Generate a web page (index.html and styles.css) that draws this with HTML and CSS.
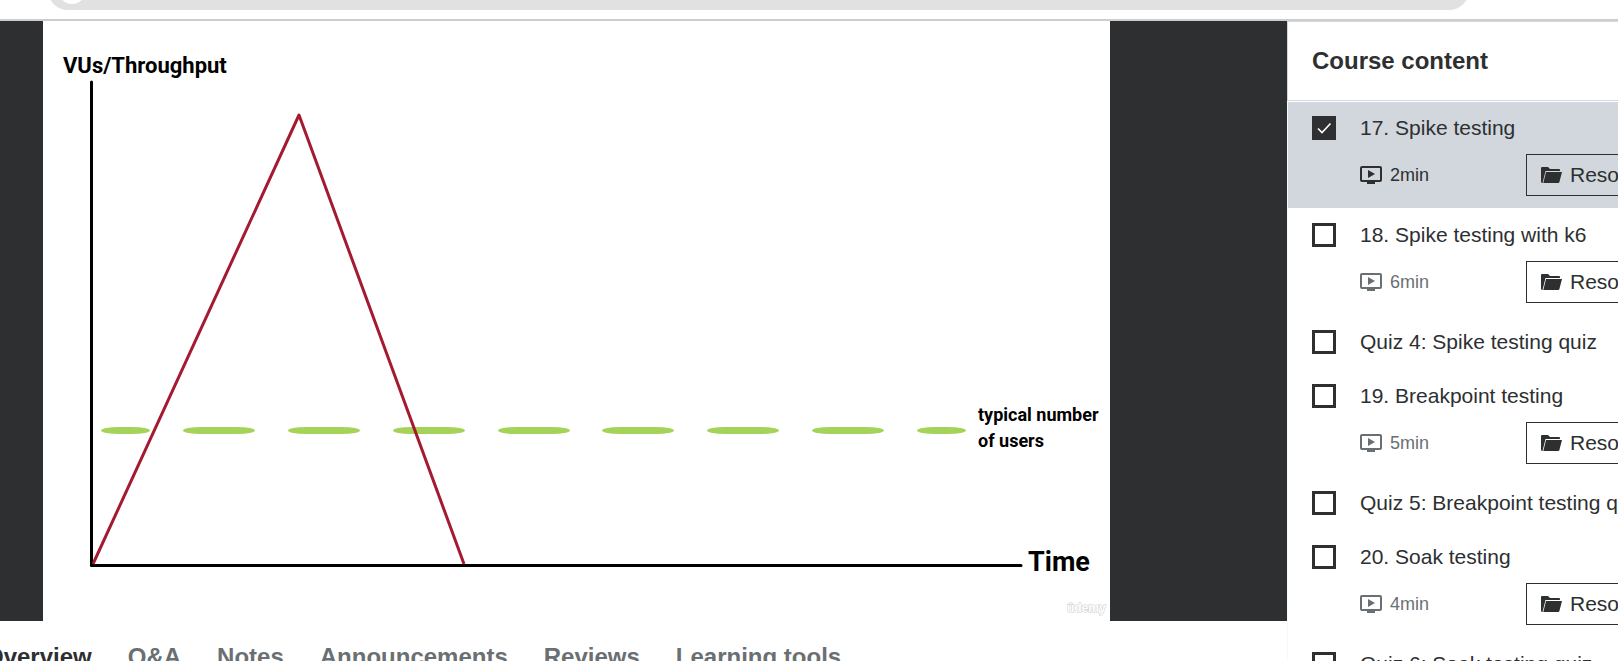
FILE: index.html
```html
<!DOCTYPE html>
<html lang="en">
<head>
<meta charset="utf-8">
<title>Spike testing</title>
<link rel="stylesheet" href="styles.css">
</head>
<body>
<svg class="sprite" aria-hidden="true">
  <symbol id="i-video" viewBox="0 0 22 18">
    <path fill-rule="evenodd" d="M2 0h18a2 2 0 0 1 2 2v12a2 2 0 0 1-2 2h-5v2H7v-2H2a2 2 0 0 1-2-2V2a2 2 0 0 1 2-2zm0 2v12h18V2z"/>
    <path d="M8 4l7 4-7 4z"/>
  </symbol>
  <symbol id="i-folder" viewBox="0 0 21 16">
    <path d="M1 0h6l2 2h9a1 1 0 0 1 1 1v1H4.500L2 14 1.500 16A1.500 1.500 0 0 1 0 14.500V1a1 1 0 0 1 1-1z"/>
    <path d="M5 5h16l-2.600 10a1.300 1.300 0 0 1-1.200 1H2.300z"/>
  </symbol>
  <symbol id="i-check" viewBox="0 0 24 24">
    <path d="M6 12.500l4 4 8.500-9" fill="none" stroke="#fff" stroke-width="1.600"/>
  </symbol>
  <symbol id="i-chevron" viewBox="0 0 16 16">
    <path d="M3 5l5 5 5-5" fill="none" stroke="currentColor" stroke-width="2"/>
  </symbol>
</svg>

<header class="toolbar"><div class="address"><span class="address-badge"></span></div></header>

<div class="layout">
  <main class="main">
    <div class="player">
      <svg class="slide" viewBox="0 0 1067 600" role="img" aria-label="Spike test load over time">
        <g class="axis"><path d="M48.500 61V544"/><path d="M48.500 544.500H978"/></g>
        <g class="typical">
          <rect x="58" y="406" width="49" height="7" rx="18" ry="3.500"/>
          <rect x="140" y="406" width="72" height="7" rx="18" ry="3.500"/>
          <rect x="245" y="406" width="72" height="7" rx="18" ry="3.500"/>
          <rect x="350" y="406" width="72" height="7" rx="18" ry="3.500"/>
          <rect x="455" y="406" width="72" height="7" rx="18" ry="3.500"/>
          <rect x="559" y="406" width="72" height="7" rx="18" ry="3.500"/>
          <rect x="664" y="406" width="72" height="7" rx="18" ry="3.500"/>
          <rect x="769" y="406" width="72" height="7" rx="18" ry="3.500"/>
          <rect x="874" y="406" width="49" height="7" rx="18" ry="3.500"/>
        </g>
        <path class="spike" d="M50 543L256 94L421 543"/>
        <text class="label label-y" x="20" y="52">VUs/Throughput</text>
        <text class="label label-note" x="935" y="400">typical number</text>
        <text class="label label-note" x="935" y="426">of users</text>
        <text class="label label-x" x="985" y="550">Time</text>
        <text class="watermark" x="1024" y="591">ûdemy</text>
      </svg>
    </div>
    <nav class="tabs">
      <button class="tab tab-active" type="button">Overview</button>
      <button class="tab" type="button">Q&amp;A</button>
      <button class="tab" type="button">Notes</button>
      <button class="tab" type="button">Announcements</button>
      <button class="tab" type="button">Reviews</button>
      <button class="tab" type="button">Learning tools</button>
    </nav>
  </main>

  <aside class="sidebar">
    <h2 class="sidebar-title">Course content</h2>
    <ul class="items">
      <li class="item item-current">
        <span class="tick"><input type="checkbox" id="c1" checked><svg><use href="#i-check"/></svg></span>
        <label class="name" for="c1">17. Spike testing</label>
        <div class="meta"><span class="duration"><svg><use href="#i-video"/></svg>2min</span>
        <button class="resources" type="button"><svg class="folder"><use href="#i-folder"/></svg>Resources<svg class="chevron"><use href="#i-chevron"/></svg></button></div>
      </li>
      <li class="item">
        <span class="tick"><input type="checkbox" id="c2"></span>
        <label class="name" for="c2">18. Spike testing with k6</label>
        <div class="meta"><span class="duration"><svg><use href="#i-video"/></svg>6min</span>
        <button class="resources" type="button"><svg class="folder"><use href="#i-folder"/></svg>Resources<svg class="chevron"><use href="#i-chevron"/></svg></button></div>
      </li>
      <li class="item">
        <span class="tick"><input type="checkbox" id="c3"></span>
        <label class="name" for="c3">Quiz 4: Spike testing quiz</label>
      </li>
      <li class="item">
        <span class="tick"><input type="checkbox" id="c4"></span>
        <label class="name" for="c4">19. Breakpoint testing</label>
        <div class="meta"><span class="duration"><svg><use href="#i-video"/></svg>5min</span>
        <button class="resources" type="button"><svg class="folder"><use href="#i-folder"/></svg>Resources<svg class="chevron"><use href="#i-chevron"/></svg></button></div>
      </li>
      <li class="item">
        <span class="tick"><input type="checkbox" id="c5"></span>
        <label class="name" for="c5">Quiz 5: Breakpoint testing quiz</label>
      </li>
      <li class="item">
        <span class="tick"><input type="checkbox" id="c6"></span>
        <label class="name" for="c6">20. Soak testing</label>
        <div class="meta"><span class="duration"><svg><use href="#i-video"/></svg>4min</span>
        <button class="resources" type="button"><svg class="folder"><use href="#i-folder"/></svg>Resources<svg class="chevron"><use href="#i-chevron"/></svg></button></div>
      </li>
      <li class="item">
        <span class="tick"><input type="checkbox" id="c7"></span>
        <label class="name" for="c7">Quiz 6: Soak testing quiz</label>
      </li>
    </ul>
  </aside>
</div>
</body>
</html>
```

FILE: styles.css
```css
* { box-sizing: border-box; }
body {
  margin: 0;
  height: 100vh;
  overflow: hidden;
  display: flex;
  flex-direction: column;
  background: #fff;
  color: #2d2f31;
  font-family: "Liberation Sans", Arial, sans-serif;
}
button { font: inherit; color: inherit; background: none; border: 0; padding: 0; }
.sprite { display: none; }

.toolbar {
  flex: none;
  height: 21px;
  overflow: hidden;
  display: flex;
  align-items: flex-end;
  padding: 0 149px 9px 48px;
  border-bottom: 2px solid #cdcdcd;
}
.address {
  flex: 1;
  height: 40px;
  border-radius: 20px;
  background: #e1e1e1;
  display: flex;
  align-items: center;
  padding: 0 10px;
}
.address-badge { width: 28px; height: 28px; border-radius: 50%; background: #fff; }

.layout { flex: 1; min-height: 0; display: flex; }
.main { flex: 1; min-width: 0; overflow: hidden; }
.player { background: #2d2f31; padding: 0 177px 0 43px; }
.slide { display: block; width: 100%; background: #fff; }
.axis { fill: none; stroke: #000; stroke-width: 3; stroke-linecap: round; }
.typical { fill: #a5d35a; }
.spike { fill: none; stroke: #a31a31; stroke-width: 3; stroke-linejoin: round; }
.label { font-family: Roboto, "Liberation Sans", sans-serif; font-weight: 700; fill: #000; }
.label-y { font-size: 22px; }
.label-note { font-size: 18px; }
.label-x { font-size: 27px; }
.watermark { font-size: 12px; font-weight: 700; fill: #fff; stroke: #c8c8c8; stroke-width: 1; paint-order: stroke; }

.tabs { display: flex; gap: 36px; margin-left: -15px; padding-top: 20px; }
.tab { flex: none; font-size: 24px; font-weight: 700; line-height: 32px; color: #6a6f73; }
.tab-active { color: #2d2f31; }

.sidebar { flex: none; width: 331px; overflow: hidden; }
.sidebar-title {
  margin: 0 0 1px;
  padding: 24px;
  border: 1px solid #d1d7dc;
  border-right: 0;
  font-size: 24px;
  line-height: 30px;
}
.items {
  list-style: none;
  margin: 0;
  padding: 0;
  width: 444px;
  display: grid;
  gap: 1px;
  border-left: 1px solid #f7f9fa;
}
.item {
  min-height: 53px;
  padding: 12px 24px;
  display: grid;
  grid-template-columns: 24px 1fr;
  grid-auto-rows: min-content;
  align-items: center;
  gap: 12px 24px;
}
.item-current { background: #d1d7dc; }
.tick { display: grid; }
.tick > * { grid-area: 1 / 1; width: 24px; height: 24px; }
.tick input { appearance: none; margin: 0; border: 3px solid #2d2f31; }
.tick input:checked { background: #2d2f31; }
.tick svg { pointer-events: none; z-index: 1; }
.name { font-size: 21px; line-height: 28px; white-space: nowrap; }
.meta { grid-column: 2; display: flex; align-items: center; justify-content: space-between; }
.duration { display: flex; align-items: center; gap: 8px; font-size: 18px; color: #6a6f73; }
.duration svg { width: 22px; height: 18px; fill: currentColor; }
.item-current .duration { color: #2d2f31; }
.resources {
  width: 181px;
  height: 42px;
  padding: 0 14px;
  display: flex;
  align-items: center;
  gap: 8px;
  border: 1px solid #2d2f31;
  font-size: 21px;
}
.folder { flex: none; width: 21px; height: 16px; fill: currentColor; }
.chevron { flex: none; width: 16px; height: 16px; }
```
